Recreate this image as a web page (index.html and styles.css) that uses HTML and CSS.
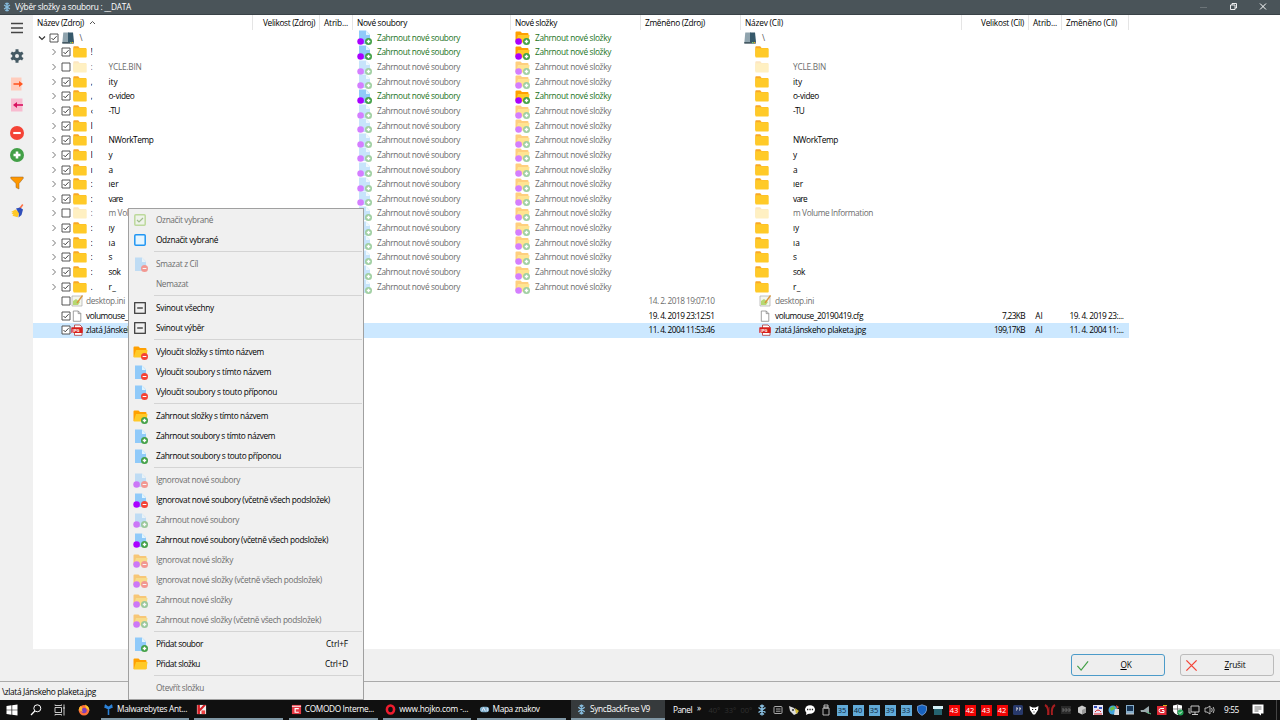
FILE: index.html
```html
<!DOCTYPE html>
<html lang="cs">
<head>
<meta charset="utf-8">
<title>Výběr složky a souboru</title>
<link rel="stylesheet" href="styles.css">
</head>
<body>
<svg class="defs" aria-hidden="true">
  <symbol id="plus" viewBox="0 0 6 6"><circle cx="3" cy="3" r="3" fill="#43a047"/><path d="M3 1.5v3M1.5 3h3" stroke="#fff" stroke-width="1.1"/></symbol>
  <symbol id="minus" viewBox="0 0 6 6"><circle cx="3" cy="3" r="3" fill="#f44336"/><path d="M1.4 3h3.2" stroke="#fff" stroke-width=".9"/></symbol>
  <symbol id="doc" viewBox="0 0 15 15"><path d="M2 .5h7l4 4V14H2z" fill="#90caf9"/><path d="M9 .5V5h4z" fill="#e1f5fe"/></symbol>
  <symbol id="openfolder" viewBox="0 0 15 15"><path d="M.5 2.5q0-1 1-1h4L7 3h5.500q1 0 1 1v8H.5z" fill="#ffa000"/><path d="M3 5h11.500l-1 6.500q-.2 1-1 1H.7z" fill="#ffca28"/></symbol>
  <symbol id="folder" viewBox="0 0 14 12"><path d="M.3 1.2Q.3.3 1.2.3h4L6.600 2H13v8H.3z" fill="#f9a825"/><rect x=".3" y="2.2" width="13.4" height="9.4" rx=".8" fill="#ffca28"/></symbol>
  <symbol id="doc-plus" viewBox="0 0 15 15"><use href="#doc" width="15" height="15"/><use href="#plus" x="8" y="8" width="7" height="7"/></symbol>
  <symbol id="doc-minus" viewBox="0 0 15 15"><use href="#doc" width="15" height="15"/><use href="#minus" x="8" y="8" width="7" height="7"/></symbol>
  <symbol id="fol-plus" viewBox="0 0 15 15"><use href="#openfolder" width="15" height="15"/><use href="#plus" x="8" y="8" width="7" height="7"/></symbol>
  <symbol id="fol-minus" viewBox="0 0 15 15"><use href="#openfolder" width="15" height="15"/><use href="#minus" x="8" y="8" width="7" height="7"/></symbol>
  <symbol id="dot-doc-plus" viewBox="0 0 15 15"><use href="#doc-plus" width="15" height="15"/><circle cx="3.6" cy="11.5" r="3.3" fill="#aa00ff"/></symbol>
  <symbol id="dot-doc-minus" viewBox="0 0 15 15"><use href="#doc-minus" width="15" height="15"/><circle cx="3.6" cy="11.5" r="3.3" fill="#aa00ff"/></symbol>
  <symbol id="dot-fol-plus" viewBox="0 0 15 15"><use href="#fol-plus" width="15" height="15"/><circle cx="3.6" cy="11.5" r="3.3" fill="#aa00ff"/></symbol>
  <symbol id="dot-fol-minus" viewBox="0 0 15 15"><use href="#fol-minus" width="15" height="15"/><circle cx="3.6" cy="11.5" r="3.3" fill="#aa00ff"/></symbol>
  <symbol id="drive" viewBox="0 0 12 12"><path d="M1.300.5H7V11H.3z" fill="#90a4ae"/><path d="M6 .5h5L12 10H6z" fill="#37596b"/><path d="M.3 10h11.500v1.700H.3z" fill="#455a64"/><path d="M8 10h1.500v1.200H8z" fill="#76d275"/><path d="M10 10h1v1.200h-1z" fill="#ffb300"/></symbol>
  <symbol id="check-on" viewBox="0 0 10 10"><path d="M1 1h8v8H1z" fill="#fff" stroke="#444" stroke-width=".9"/><path d="M2.500 5l1.700 1.800L7.600 3.200" fill="none" stroke="#444"/></symbol>
  <symbol id="check-off" viewBox="0 0 10 10"><path d="M1 1h8v8H1z" fill="#fff" stroke="#444" stroke-width=".9"/></symbol>
  <symbol id="ini" viewBox="0 0 12 12"><path d="M1 1h10v10H1z" fill="#f4f6ee" stroke="#aaa" stroke-width=".7"/><path d="M2 6l3-2 4 3-2 3H2z" fill="#b5d873"/><path d="M11.500.5L6 8" stroke="#d9953b" stroke-width="1.300"/></symbol>
  <symbol id="page" viewBox="0 0 12 12"><path d="M2.300 1h5l2.500 2.500v7.800H2.300zM7.200 1v2.600h2.600" fill="#fff" stroke="#888" stroke-width=".8"/></symbol>
  <symbol id="jpg" viewBox="0 0 12 12"><path d="M3.500 1h5.500l2 2v8.300H3.500z" fill="#fff" stroke="#a33" stroke-width=".8"/><rect x=".3" y="3.300" width="11.400" height="5.700" rx=".6" fill="#d8201d"/><text x="1.500" y="7.800" class="jpg-text">JPG</text></symbol>
  <symbol id="sync" viewBox="0 0 12 12"><path d="M6 .5v11M2.500 3.500l7 5M2.500 8.500l7-5M4 1.500L6 3l2-1.500M4 10.500L6 9l2 1.500" fill="none" stroke="#86bbdc" stroke-width="1.500"/></symbol>
  <symbol id="m-on" viewBox="0 0 12 12"><rect x=".8" y=".8" width="10.4" height="10.4" rx="1" fill="#edf7e5" stroke="#8bc34a" stroke-width="1.500"/><path d="M3 6l2 2 4-4" fill="none" stroke="#558b2f" stroke-width="1.200"/></symbol>
  <symbol id="m-off" viewBox="0 0 12 12"><rect x=".8" y=".8" width="10.4" height="10.4" rx="1" fill="#e5f5ff" stroke="#2196f3" stroke-width="1.500"/></symbol>
  <symbol id="m-col" viewBox="0 0 12 12"><rect x=".7" y=".7" width="10.6" height="10.6" fill="none" stroke="#333" stroke-width="1.200"/><path d="M3.200 6h5.600" stroke="#333" stroke-width="1.300"/></symbol>
</svg>

<div class="window">
  <header class="titlebar">
    <svg class="app-icon"><use href="#sync"/></svg>
    <span data-w="116">Výběr složky a souboru : __DATA</span>
    <svg class="caption" viewBox="0 0 80 10"><path d="M1 5.500h7" stroke="#6c7478"/><path d="M31.500 3h4.500v4.500h-4.500zM33 3V1.500h4.500V6H36" fill="none" stroke="#fff" stroke-width=".9"/><path d="M61 1.500l6 6M67 1.500l-6 6" stroke="#fff" stroke-width="1"/></svg>
  </header>

  <main class="workspace">
    <nav class="sidebar">
      <svg class="tool t1" viewBox="0 0 14 14"><path d="M1 2.500h12M1 7h12M1 11.500h12" stroke="#444" stroke-width="1.600"/></svg>
      <svg class="tool t2" viewBox="0 0 14 14"><g stroke="#455a64" stroke-width="3"><path d="M7 .3v13.400M1.200 3.700l11.600 6.600M1.200 10.300l11.600-6.600"/></g><circle cx="7" cy="7" r="4.800" fill="#455a64"/><circle cx="7" cy="7" r="2" fill="#eee"/></svg>
      <svg class="tool t3" viewBox="0 0 14 14"><rect x="1" y=".5" width="10.500" height="13" fill="#ffccbc"/><path d="M3.500 7H9" stroke="#ff5722" stroke-width="1.600"/><path d="M9 4l4 3-4 3z" fill="#ff5722"/></svg>
      <svg class="tool t4" viewBox="0 0 14 14"><rect x="1" y=".5" width="11.500" height="13" fill="#f8bbd0"/><path d="M13 7H6" stroke="#d8105e" stroke-width="1.600"/><path d="M7 4L3 7l4 3z" fill="#d8105e"/></svg>
      <svg class="tool t5"><use href="#minus"/></svg>
      <svg class="tool t6"><use href="#plus"/></svg>
      <svg class="tool t7" viewBox="0 0 14 14"><path d="M.8 1h12.400v1.500L9 7.500v5.500l-3-1.500v-4L.8 2.500z" fill="#ff9800" stroke="#90622f" stroke-width=".5"/></svg>
      <svg class="tool t8" viewBox="0 0 14 14"><path d="M12.800.5L9.500 5" stroke="#ff7043" stroke-width="1.600"/><path d="M5.500 5.500L1 8l2 .5-1.500 1.500 2 .3-1 1.500 5 1.500 2-4.500z" fill="#ffc928"/><path d="M6 4.500l4-1 3 2-1.500 5.500-3 2.500.5-4z" fill="#304fba"/></svg>
    </nav>
    <section class="tree">
      <div class="grid head">
        <span class="name"><span data-w="47">Název (Zdroj)</span><svg class="sort" viewBox="0 0 7 5"><path d="M1 4l2.500-2.500L6 4" fill="none" stroke="#555"/></svg></span>
        <span class="num"><span data-w="52">Velikost (Zdroj)</span></span>
        <span><span data-w="24">Atrib...</span></span>
        <span><span data-w="50">Nové soubory</span></span>
        <span><span data-w="42">Nové složky</span></span>
        <span><span data-w="60">Změněno (Zdroj)</span></span>
        <span><span data-w="38">Název (Cíl)</span></span>
        <span class="num"><span data-w="43">Velikost (Cíl)</span></span>
        <span><span data-w="24">Atrib...</span></span>
        <span><span data-w="51">Změněno (Cíl)</span></span>
      </div>
      <div id="rows"></div>
    </section>
  </main>

  <div class="actions">
    <button class="btn ok"><svg viewBox="0 0 14 14"><path d="M1.500 7.500l4 4.500L13 2.500" fill="none" stroke="#43a047" stroke-width="1.300"/></svg><span><u>O</u>K</span></button>
    <button class="btn"><svg viewBox="0 0 14 14"><path d="M1.500 1.500l11 11M12.500 1.500l-11 11" stroke="#f44336" stroke-width="1.400"/></svg><span><u>Z</u>rušit</span></button>
  </div>
  <div class="status"><span data-w="94">\zlatá Jánskeho plaketa.jpg</span></div>

  <footer class="taskbar">
    <div class="launch">
      <svg viewBox="0 0 12 12"><path d="M.5 2l5-.7v4.400h-5zM6.200 1.200L11.500.500v5.200H6.200zM.5 6.300h5v4.400l-5-.7zM6.200 6.300h5.300v5.200l-5.300-.7z" fill="#fff"/></svg>
      <svg viewBox="0 0 12 12"><circle cx="7.300" cy="4.300" r="3.500" fill="none" stroke="#fff"/><path d="M4.800 7L1 11" stroke="#fff" stroke-width="1.200"/></svg>
      <svg viewBox="0 0 12 12"><path d="M1 3.500h6.500v5H1zM1 .5v1h6.500v-1M1 11.500v-1h6.500v1M10 .5v11M9 4h2" fill="none" stroke="#ddd" stroke-width=".9"/></svg>
      <svg viewBox="0 0 12 12"><circle cx="6" cy="6.300" r="5.300" fill="#ff7139"/><path d="M7 .5q4.500 2 4.300 6L8 4z" fill="#ffca28"/><circle cx="6" cy="6.500" r="2.700" fill="#7b3fbd"/><path d="M.7 6q.2-3 2-4l1.800 2Q3 6 5 8z" fill="#ffb52e"/></svg>
    </div>
    <div class="tasks">
      <div class="task"><svg viewBox="0 0 12 12"><path d="M2 1l4 3 4-3M1.500 3L6 5l4.500-2M6 4v8" fill="none" stroke="#2c82d8" stroke-width="1.700"/></svg><span data-w="70">Malwarebytes Ant...</span></div>
      <div class="task"><svg viewBox="0 0 12 12"><path d="M1 1h10v10H1z" fill="#eee"/><path d="M1.500 1h2.800v4L8 1h3L6.500 6 4.300 8v3H1.500z" fill="#d61f26"/><path d="M6 7h4v4H6z" fill="#e44"/></svg></div>
      <div class="task"><svg viewBox="0 0 12 12"><rect x="1" y="1" width="10" height="10" fill="#e53945"/><path d="M1 2.500h10" stroke="#fff"/><path d="M8.500 5h-4v4h4" fill="none" stroke="#fff" stroke-width="1.300"/></svg><span data-w="69">COMODO Interne...</span></div>
      <div class="task"><svg viewBox="0 0 12 12"><ellipse cx="6" cy="6" rx="3.900" ry="4.300" fill="none" stroke="#ee1c2e" stroke-width="2.800"/></svg><span data-w="69">www.hojko.com -...</span></div>
      <div class="task"><svg viewBox="0 0 12 12"><path d="M1 6q0-3 3-3h4q3 0 3 3t-3 3H4Q1 9 1 6" fill="#7eb0cc"/><path d="M3 8l2-4 2 4M9 4v4" stroke="#eef" fill="none"/></svg><span data-w="47">Mapa znakov</span></div>
      <div class="task active"><svg><use href="#sync"/></svg><span data-w="60">SyncBackFree V9</span></div>
    </div>
    <span class="panel" data-w="19">Panel</span><span class="chev">»</span>
    <div class="tray" id="tray"></div>
    <span class="clock" data-w="15">9:55</span>
    <svg class="notif" viewBox="0 0 12 12"><path d="M.5.5h11v9H9v2L6.500 9.500h-6z" fill="#fff"/><path d="M2.500 3h7M2.500 5h7M2.500 7h4" stroke="#333" stroke-width=".7"/></svg>
    <i class="show-desktop"></i>
  </footer>

  <div class="menu" id="menu"></div>
</div>
<script src="app.js"></script>
</body>
</html>
```

FILE: styles.css
```css
* { box-sizing: border-box; }
body { margin: 0; width: 1280px; height: 720px; overflow: hidden; font-family: "Open Sans", "Noto Sans", sans-serif; font-size: 8.3px; line-height: 12px; color: #000; background: #f0f0f0; }
span { white-space: nowrap; }
svg { display: block; flex: none; }
.defs { position: absolute; width: 0; height: 0; }
.jpg-text { font: bold 4.2px "Open Sans", sans-serif; fill: #fff; letter-spacing: 0; }
.window { position: relative; width: 1280px; height: 720px; display: flex; flex-direction: column; }
.titlebar { height: 15px; flex: none; display: flex; align-items: center; background: #4a5459; border-bottom: 1px solid #394247; color: #fff; padding-left: 2px; }
.app-icon { width: 10px; height: 10px; margin-right: 3px; }
.caption { width: 80px; height: 10px; margin-left: auto; margin-right: 1px; }
.workspace { height: 634px; flex: none; display: flex; }
.sidebar { width: 33px; display: flex; flex-direction: column; align-items: center; padding-top: 6px; }
.tool { width: 14px; height: 14px; }
.t2 { margin-top: 14px; }
.t3 { margin-top: 14px; }
.t4 { margin-top: 7px; }
.t5 { margin-top: 14px; }
.t6 { margin-top: 8px; }
.t7 { margin-top: 14px; }
.t8 { margin-top: 14px; }
.tree { flex: 1; background: #fff; }
.grid { display: grid; grid-template-columns: 220px 67px 33px 158px 130px 100px 221px 67px 33px 67px; width: 1096px; height: 14.65px; align-items: center; }
.grid > span { display: flex; align-items: center; height: 100%; padding-left: 4px; }
.head { height: 15.3px; }
.head > span { border-right: 1px solid #e5e5e5; }
.grid > .num { justify-content: flex-end; padding-right: 4px; }
.sort { width: 7px; height: 5px; margin-left: 5px; }
.row.selected { background: #cce8ff; }
.row.dim { color: #6d6d6d; }
.dim .folder { opacity: .28; }
.grid > .src { padding-left: 17px; }
.grid > .root { padding-left: 5px; }
.exp { width: 8px; height: 8px; margin-right: 2.5px; }
.cb { width: 10px; height: 10px; margin-right: 2px; }
.root .cb { margin-right: 3px; }
.drive { width: 12px; height: 12px; }
.slash { margin-left: 6px; color: #555; }
.folder { width: 14px; height: 12px; }
.frag { width: 3px; overflow: hidden; margin-left: 4px; margin-right: 15px; }
.file { width: 12px; height: 12px; margin-right: 3px; }
.src .file { margin-left: -1.5px; }
.grid > .dst { padding-left: 14px; }
.grid > .dst-file { padding-left: 18px; }
.grid > .dst-file .file { margin-right: 4px; }
.grid > .dst-root { padding-left: 3px; }
.gap { width: 24px; }
.grid > .opt { color: #1b7323; }
.grid > .opt.off { color: #6d6d6d; }
.opt .ico { width: 15px; height: 15px; margin-right: 5px; }
.opt.off .ico { opacity: .5; }
.grid > .date { padding-left: 7.5px; }
.actions { height: 32px; flex: none; display: flex; justify-content: flex-end; gap: 15px; padding: 5px 6px 0 0; }
.btn { width: 94px; height: 22px; border: 1px solid #bbb; border-radius: 3px; background: #eee; font: inherit; color: #000; padding: 0 0 0 4px; display: flex; align-items: center; }
.btn.ok { border-color: #4c9bc9; }
.btn svg { width: 13px; height: 13px; }
.btn > span { flex: 1; text-align: center; padding-right: 1px; letter-spacing: -.2px; }
.status { height: 19px; flex: none; border-top: 1px solid #aaa; padding: 4px 0 0 2px; }
.taskbar { height: 20px; flex: none; background: #101010; color: #fff; display: flex; align-items: center; }
.launch { width: 101px; display: flex; gap: 12px; padding-left: 6px; }
.launch svg { width: 12px; height: 12px; }
.tasks { width: 564px; height: 20px; display: grid; grid-template-columns: 88px 89px 89px 88px 89px 94px; column-gap: 5.4px; }
.task { display: flex; align-items: center; gap: 3px; padding-left: 2px; border-bottom: 2px solid #8097a5; }
.task svg { width: 11px; height: 11px; }
.task.active { background: #363a3c; padding-left: 5px; }
.panel { margin-left: 8px; }
.chev { margin: -5px 0 0 5px; width: 4px; }
.tray { margin-left: 5px; display: grid; grid-template-columns: repeat(32, 16px); width: 512px; align-items: center; justify-items: center; }
.badge { width: 11px; height: 11px; font-size: 7.5px; line-height: 11px; text-align: center; }
.blue { background: #62abd8; color: #09233b; }
.red { background: #f00505; }
.ghost { color: #303030; }
.tray svg { width: 12px; height: 12px; }
.clock { margin-left: 6px; }
.notif { width: 12px; height: 12px; margin-left: 13px; }
.show-desktop { width: 1px; height: 20px; background: #444; margin-left: 12px; }
.menu { position: absolute; left: 128px; top: 208px; width: 236px; height: 492px; background: #f0f0f0; border: 1px solid #a0a0a0; padding-top: 1px; }
.item { height: 20px; display: flex; align-items: center; padding-left: 4px; }
.item .ico { width: 15px; height: 15px; margin-right: 8px; }
.item .box { width: 12px; height: 12px; margin-right: 10px; margin-left: 1px; }
.item.dis { color: #6d6d6d; }
.item.dis svg { opacity: .5; }
.item .key { margin-left: auto; margin-right: 15px; }
.sep { height: 1px; margin: 1px 1px 2px 25px; background: #d4d4d4; }
```

FILE: app.js
```js
const use = (id, cls) => `<svg class="${cls}"><use href="#${id}"/></svg>`;
const label = (text, w) => `<span${w ? ` data-w="${w}"` : ''}>${text}</span>`;

// Folder rows: leading fragment, trailing part, its width
const folders = [
  ['!', ''], [':', 'YCLE.BIN', 33], ['‚', 'ity', 9], ['‚', 'o-video', 26], ['‹', '-TU', 11], ['I', ''],
  ['I', 'NWorkTemp', 45], ['I', 'y', 4], ['ı', 'a', 4], [':', 'ıer', 10], [':', 'vare', 14],
  [':', 'm Volume Information', 80], [':', 'ıy', 6], [':', 'ıa', 7], [':', 's', 3], [':', 'sok', 12], ['.', 'r_', 8]
];
const exp = '<svg class="exp" viewBox="0 0 8 8"><path d="M2.500 1L5.500 4l-3 3" fill="none" stroke="#777"/></svg>';
const down = '<svg class="exp" viewBox="0 0 8 8"><path d="M1 2.500l3 3 3-3" fill="none" stroke="#333" stroke-width="1.200"/></svg>';
const options = on => {
  const c = on ? 'opt' : 'opt off';
  return `<span class="${c}">${use('dot-doc-plus', 'ico')}${label('Zahrnout nové soubory', 83)}</span>` +
    `<span class="${c}">${use('dot-fol-plus', 'ico')}${label('Zahrnout nové složky', 76)}</span>`;
};
let html = `<div class="grid row"><span class="root">${down}${use('check-on', 'cb')}${use('drive', 'drive')}<span class="slash">\\</span></span><span></span><span></span>${options(true)}<span></span><span class="dst-root">${use('drive', 'drive')}<span class="slash">\\</span></span></div>`;
folders.forEach(([a, b, w], i) => {
  const dim = i === 1 || i === 11;
  const icon = use('folder', 'folder');
  const rest = label(b, w);
  html += `<div class="grid row${dim ? ' dim' : ''}"><span class="src">${exp}${use(dim ? 'check-off' : 'check-on', 'cb')}${icon}<span class="frag">${a}</span>${rest}</span><span></span><span></span>${options(i === 0 || i === 3)}<span></span><span class="dst">${icon}<span class="gap"></span>${rest}</span></div>`;
});
[
  ['dim', 'check-off', 'ini', 'desktop.ini', 39, '14. 2. 2018 19:07:10', '', '', '', 0],
  ['', 'check-on', 'page', 'volumouse_20190419.cfg', 88, '19. 4. 2019 23:12:51', '7,23KB', 'AI', '19. 4. 2019 23:...', 23],
  ['selected', 'check-on', 'jpg', 'zlatá Jánskeho plaketa.jpg', 91, '11. 4. 2004 11:53:46', '199,17KB', 'AI', '11. 4. 2004 11:...', 31]
].forEach(([c, box, icon, name, w, date, size, at, d2, sw]) => {
  const n = use(icon, 'file') + label(name, w);
  html += `<div class="grid row ${c}"><span class="src"><svg class="exp"></svg>${use(box, 'cb')}${n}</span><span></span><span></span><span></span><span></span><span class="date">${label(date, 66)}</span><span class="dst-file">${n}</span><span class="num">${label(size, sw)}</span><span>&nbsp;${at}</span><span class="date">${d2 ? label(d2, 54) : ''}</span></div>`;
});
document.getElementById('rows').innerHTML = html;

const items = [
  ['m-on', 'Označit vybrané', 57, 1], ['m-off', 'Odznačit vybrané', 62], 0,
  ['doc-minus', 'Smazat z Cíl', 42, 1], ['', 'Nemazat', 32, 1], 0,
  ['m-col', 'Svinout všechny', 58], ['m-col', 'Svinout výběr', 48], 0,
  ['fol-minus', 'Vyloučit složky s tímto názvem', 108], ['doc-minus', 'Vyloučit soubory s tímto názvem', 115], ['doc-minus', 'Vyloučit soubory s touto příponou', 121], 0,
  ['fol-plus', 'Zahrnout složky s tímto názvem', 112], ['doc-plus', 'Zahrnout soubory s tímto názvem', 119], ['doc-plus', 'Zahrnout soubory s touto příponou', 125], 0,
  ['dot-doc-minus', 'Ignorovat nové soubory', 84, 1], ['dot-doc-minus', 'Ignorovat nové soubory (včetně všech podsložek)', 174],
  ['dot-doc-plus', 'Zahrnout nové soubory', 83, 1], ['dot-doc-plus', 'Zahrnout nové soubory (včetně všech podsložek)', 172],
  ['dot-fol-minus', 'Ignorovat nové složky', 77, 1], ['dot-fol-minus', 'Ignorovat nové složky (včetně všech podsložek)', 166, 1],
  ['dot-fol-plus', 'Zahrnout nové složky', 76, 1], ['dot-fol-plus', 'Zahrnout nové složky (včetně všech podsložek)', 165, 1], 0,
  ['doc-plus', 'Přidat soubor', 47, 0, 'Ctrl+F', 22], ['openfolder', 'Přidat složku', 44, 0, 'Ctrl+D', 23], 0,
  ['', 'Otevřít složku', 48, 1]
];
document.getElementById('menu').innerHTML = items.map(it => {
  if (!it) return '<div class="sep"></div>';
  const [icon, text, w, dis, key, kw] = it;
  const svg = icon ? use(icon, icon.startsWith('m-') ? 'box' : 'ico') : '<svg class="ico"></svg>';
  return `<div class="item${dis ? ' dis' : ''}">${svg}${label(text, w)}${key ? `<span class="key" data-w="${kw}">${key}</span>` : ''}</div>`;
}).join('');

const g = s => `<svg viewBox="0 0 12 12">${s}</svg>`;
const badge = (c, t) => `<span class="badge ${c}">${t}</span>`;
document.getElementById('tray').innerHTML = [
  badge('ghost', '40°'), badge('ghost', '33°'), badge('ghost', '00°'),
  g('<use href="#sync"/>'),
  g('<rect x="2" y="2.500" width="8" height="7" rx="1" fill="none" stroke="#aaa"/><path d="M4 5h4.500M4 7.200h4.500" stroke="#aaa"/>'),
  g('<path d="M1 2l5 2 4 5-4 2-4-4z" fill="#ddd"/><path d="M7 4l4 3-3 3z" fill="#d6be35"/><circle cx="5" cy="6" r="1" fill="#333"/>'),
  g('<ellipse cx="6" cy="5.500" rx="5" ry="4.300" fill="#fff"/><path d="M2.500 8L2 11l4-2z" fill="#fff"/><path d="M3 5.500h1.300M5.400 5.500h1.300M7.800 5.500h1.300" stroke="#222" stroke-width="1.300"/>'),
  g('<path d="M4 1h4v3H4zM3 4h6v7H3zM5 2v1M7 2v1" fill="none" stroke="#ccc" stroke-width=".9"/>'),
  ...['35', '40', '35', '39', '33'].map(t => badge('blue', t)),
  g('<path d="M6 .8l4.500 1.500v4Q10 9.500 6 11.400 2 9.500 1.500 6.300v-4z" fill="#1761be" stroke="#8eb5e6" stroke-width=".7"/>'),
  g('<path d="M1 2h10v3H1z" fill="#d3eef5"/><path d="M3 5v6M5 5v6M7 5v6M9 5v6" stroke="#3bb4ce"/>'),
  ...['43', '42', '43', '42'].map(t => badge('red', t)),
  g('<rect x="1" y="1" width="10" height="10" rx="1.500" fill="#28396b"/><path d="M4 4h1.500L4.500 6.500M7 4h1.500L7.500 6.500" stroke="#ddd" fill="none"/>'),
  g('<path d="M1.500 2l3 1.500h3l3-1.500L10 6 7 10.500H5L2 6z" fill="#fff"/><path d="M4 5.500h1.200M7 5.500h1.200M5.500 8h1" stroke="#111" stroke-width="1.200"/>'),
  g('<path d="M1 1q4 2 3 10M11 1q-4 2-3 10" fill="none" stroke="#a51e20" stroke-width="2"/><path d="M5.500 3v8" stroke="#511"/>'),
  g('<rect x="1" y="2" width="10" height="8" fill="#292929"/><path d="M2 5h2v2H2M5 5h2v2H5M8 5h2v2H8" fill="none" stroke="#777" stroke-width=".8"/>'),
  g('<path d="M6 1.500l4 2v5l-4 2-4-2v-5z" fill="#ccc"/><path d="M6 6l4-2v4.500l-4 2z" fill="#999"/>'),
  g('<path d="M1 1h10v10H1z" fill="#e6e4f6"/><path d="M2 2h3v2H2zM7 3h3v2H7z" fill="#3450bd"/><path d="M3 8q3-4 6 0M2 10h8" stroke="#d22" fill="none"/>'),
  g('<circle cx="5" cy="6" r="4.500" fill="#42a5dc"/><path d="M2 4l4-2 1 3-4 2z" fill="#6ac047"/><path d="M7 5h4v6H6z" fill="#ddd"/><path d="M8 1l3 2-2 2z" fill="#ed5943"/>'),
  g('<path d="M2 1h8v9H2z" fill="#86acc9"/><path d="M3 2h6v5H3z" fill="#183555"/><path d="M2 10h8" stroke="#ccc"/>'),
  g('<path d="M.5 6h3L9 2v8L5 8H1z" fill="#9aa9ac"/><path d="M7 8l4 2" stroke="#61c58a"/>'),
  g('<path d="M1 2h9.500v9H1z" fill="#e12935"/><path d="M8 4.500H5a2 2 0 0 0 0 4h3v-2H6" stroke="#fff" fill="none"/><path d="M7 1.500h4" stroke="#d7b61f"/>'),
  g('<path d="M1 1.500l4.500-1L10 1.500v4.500q-1 3-4.500 5Q1 9 1 6z" fill="#fff"/><path d="M1 5h9M5.500 1v9" stroke="#555" stroke-width=".7"/><circle cx="8.500" cy="8.500" r="3" fill="#20a353"/><path d="M7 8.500l1 1L10 7.500" stroke="#fff" fill="none"/>'),
  g('<path d="M3 2h8v6H3zM7 8v2.500M4 10.500h6M1 4v5h2" fill="none" stroke="#ddd" stroke-width=".9"/>'),
  g('<path d="M1 4h2l3-2v8L3 8H1zM7.500 4q1.500 2 0 4M9.200 3q2 3 0 6" fill="none" stroke="#ddd" stroke-width=".8"/>')
].join('');

document.querySelectorAll('[data-w]').forEach(el => {
  const n = el.textContent.length;
  if (!n) return;
  const natural = el.getBoundingClientRect().width;
  el.style.letterSpacing = ((+el.dataset.w - natural) / n).toFixed(3) + 'px';
});
```
